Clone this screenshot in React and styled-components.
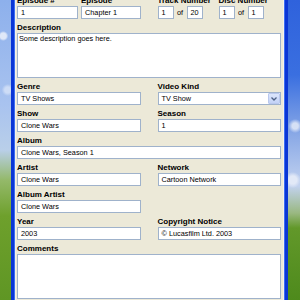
import React from "react";
import styled, { createGlobalStyle } from "styled-components";

const GlobalStyle = createGlobalStyle`
  html, body {
    margin: 0;
    padding: 0;
    overflow: hidden;
  }
  body {
    font-family: "Liberation Sans", Arial, sans-serif;
  }
`;

const Screen = styled.div`
  width: 300px;
  height: 300px;
  display: flex;
  overflow: hidden;
`;

const Desktop = styled.div`
  flex: 0 0 ${props => props.width}px;
  height: 300px;
  background: ${props =>
    props.side === "left"
      ? `radial-gradient(circle at 30% 12%, #dfe8f8 0 3px, transparent 5px),
         radial-gradient(circle at 70% 30%, #cddcf6 0 3px, transparent 6px),
         linear-gradient(180deg, #8db0ec 0%, #a9c3ef 35%, #b9cfe9 50%, #94b96a 60%, #6ea02c 72%, #5f9624 100%)`
      : `radial-gradient(circle at 60% 42%, #d5e0f5 0 3px, transparent 7px),
         radial-gradient(circle at 40% 60%, #e2e9f7 0 4px, transparent 8px),
         linear-gradient(180deg, #2f62dc 0%, #3a6fe0 25%, #8aa9e6 45%, #c2d2ef 62%, #9ab882 71%, #62982a 76%, #4e8a1c 100%)`};
`;

const Window = styled.div`
  flex: 1;
  height: 300px;
  display: flex;
  border-left: 3px solid #0a36d6;
  border-right: 3px solid #0a36d6;
  box-shadow: inset 1px 0 0 #3d6ef2, inset -1px 0 0 #3d6ef2;
  padding: 0 1px;
  background: #ece9d8;
`;

const Panel = styled.div`
  flex: 1;
  background: #ece9d8;
  border-left: 1px solid #f4f2ea;
  border-right: 1px solid #f4f2ea;
  padding: 0 2px 0 1px;
  overflow: hidden;
`;

const Form = styled.div`
  margin-top: -4px;
  display: grid;
  grid-template-columns: 1fr 1fr;
  column-gap: 17px;
  row-gap: 4px;
`;

const Field = styled.div`
  display: flex;
  flex-direction: column;
  grid-column: ${props => (props.wide ? "1 / -1" : "auto")};
  flex: ${props => (props.w ? `0 0 ${props.w}px` : props.grow ? "1" : "0 1 auto")};
  min-width: 0;
`;

const Label = styled.div`
  font-weight: bold;
  font-size: 8px;
  line-height: 10px;
  height: 10px;
  color: #000;
  white-space: nowrap;
`;

const Input = styled.div`
  box-sizing: border-box;
  height: 13px;
  width: ${props => (props.w ? `${props.w}px` : "100%")};
  flex: ${props => (props.w ? "0 0 auto" : "1")};
  background: #fff;
  border: 1px solid #9fb2cb;
  font-size: 7.3px;
  line-height: 11px;
  padding: 0 3px;
  color: #000;
  white-space: nowrap;
  overflow: hidden;
`;

const TextArea = styled.div`
  box-sizing: border-box;
  height: 45px;
  background: #fff;
  border: 1px solid #9fb2cb;
  font-size: 7.3px;
  line-height: 9px;
  padding: 0 1px;
  color: #000;
`;

const Pair = styled.div`
  display: flex;
  gap: 3px;
`;

const Group = styled.div`
  display: flex;
  padding-left: ${props => props.indent || 0}px;
`;

const InlineRow = styled.div`
  display: flex;
  align-items: center;
`;

const Of = styled.span`
  font-size: 7.3px;
  width: 13px;
  text-align: center;
  color: #000;
`;

const SelectBox = styled.div`
  box-sizing: border-box;
  height: 13px;
  display: flex;
  align-items: stretch;
  background: #fff;
  border: 1px solid #9fb2cb;
`;

const SelectText = styled.div`
  flex: 1;
  font-size: 7.3px;
  line-height: 11px;
  padding: 0 3px;
  white-space: nowrap;
`;

const DropButton = styled.div`
  width: 10px;
  margin: 0 0 0 1px;
  background: linear-gradient(180deg, #dce6fc 0%, #c3d2f6 100%);
  border: 1px solid #b9c8ee;
  border-radius: 1px;
  display: flex;
  align-items: center;
  justify-content: center;
`;

const Spacer = styled.div``;

const Chevron = () => (
  <svg width="6" height="4" viewBox="0 0 6 4">
    <path d="M0.5 0.5 L3 3 L5.5 0.5" fill="none" stroke="#4d6185" strokeWidth="1.3" />
  </svg>
);

const Text = ({ label, value, wide }) => (
  <Field wide={wide}>
    <Label>{label}</Label>
    <Input>{value}</Input>
  </Field>
);

const OfField = ({ label, first, second, w }) => (
  <Field w={w}>
    <Label>{label}</Label>
    <InlineRow>
      <Input w={16}>{first}</Input>
      <Of>of</Of>
      <Input w={16}>{second}</Input>
    </InlineRow>
  </Field>
);

const App = () => {
  return (
    <>
      <GlobalStyle />
      <Screen>
        <Desktop side="left" width={11} />
        <Window>
          <Panel>
            <Form>
              <Pair>
                <Field w={61}>
                  <Label>Episode #</Label>
                  <Input>1</Input>
                </Field>
                <Field grow>
                  <Label>Episode</Label>
                  <Input>Chapter 1</Input>
                </Field>
              </Pair>
              <Group>
                <OfField w={61} label="Track Number" first="1" second="20" />
                <OfField w={60} label="Disc Number" first="1" second="1" />
              </Group>

              <Field wide>
                <Label>Description</Label>
                <TextArea>Some description goes here.</TextArea>
              </Field>

              <Text label="Genre" value="TV Shows" />
              <Field>
                <Label>Video Kind</Label>
                <SelectBox>
                  <SelectText>TV Show</SelectText>
                  <DropButton>
                    <Chevron />
                  </DropButton>
                </SelectBox>
              </Field>

              <Text label="Show" value="Clone Wars" />
              <Text label="Season" value="1" />

              <Text wide label="Album" value="Clone Wars, Season 1" />

              <Text label="Artist" value="Clone Wars" />
              <Text label="Network" value="Cartoon Network" />

              <Text label="Album Artist" value="Clone Wars" />
              <Spacer />

              <Text label="Year" value="2003" />
              <Text label="Copyright Notice" value="© Lucasfilm Ltd. 2003" />

              <Field wide>
                <Label>Comments</Label>
                <TextArea />
              </Field>
            </Form>
          </Panel>
        </Window>
        <Desktop side="right" width={12} />
      </Screen>
    </>
  );
};

export default App;
